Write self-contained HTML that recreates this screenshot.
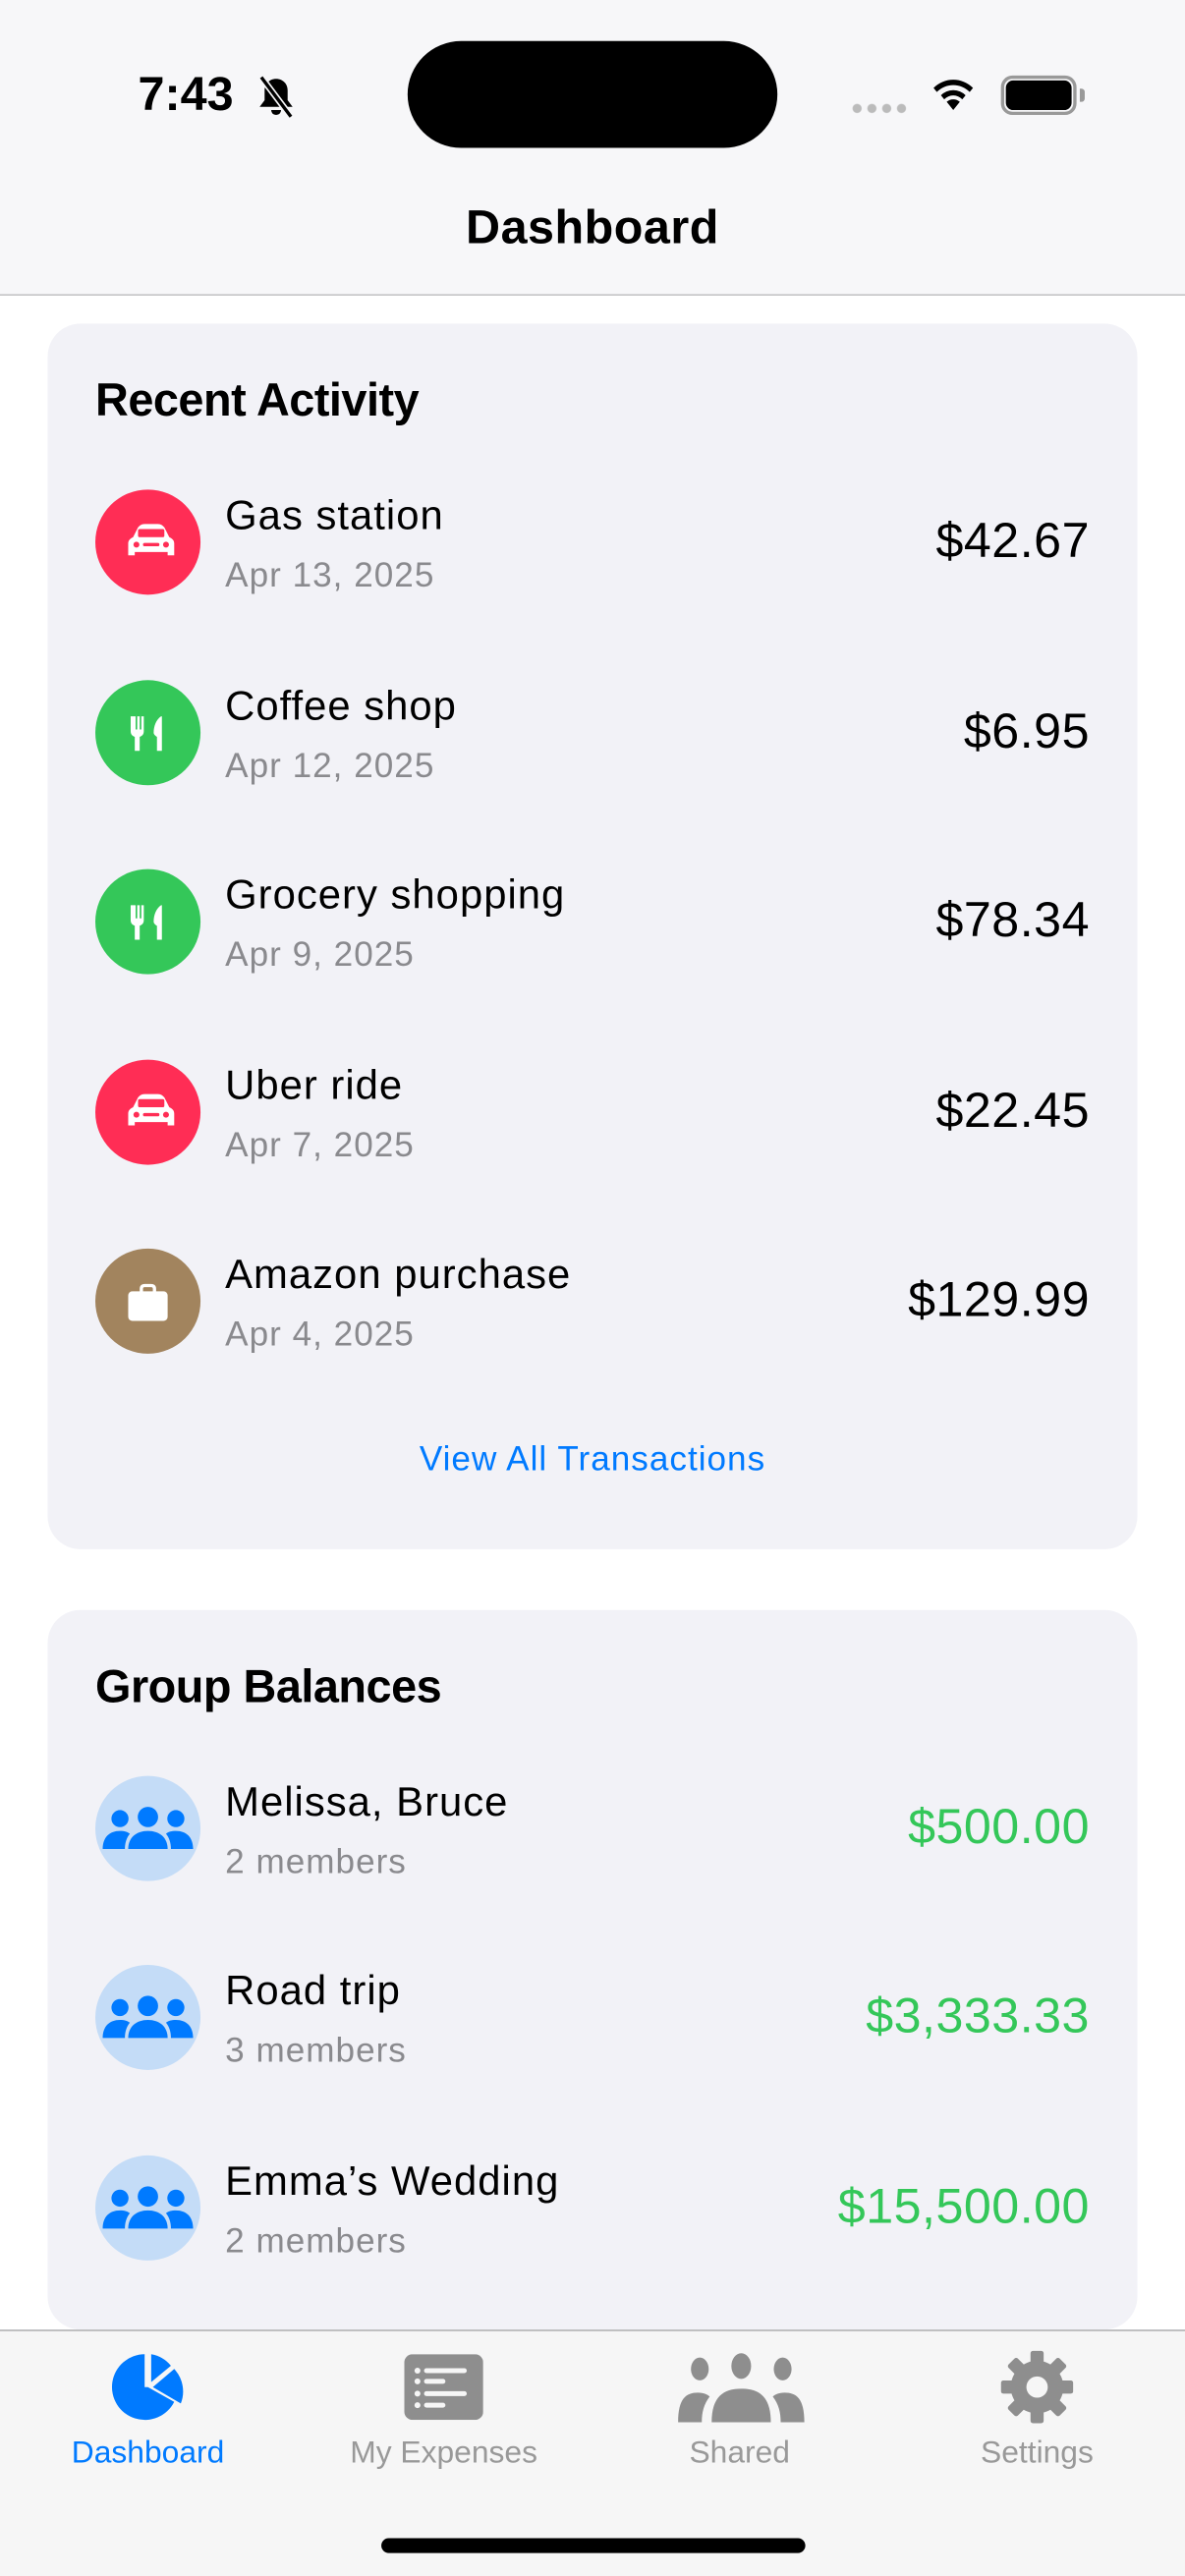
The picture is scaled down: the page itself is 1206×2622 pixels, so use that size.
<!DOCTYPE html>
<html><head><meta charset="utf-8"><style>
*{margin:0;padding:0;box-sizing:border-box}
html,body{width:1206px;height:2622px;overflow:hidden;background:#fff}
#w{position:absolute;left:0;top:0;width:721px;height:1568px;transform:scale(1.67268,1.67219);transform-origin:0 0;font-family:"Liberation Sans",sans-serif;color:#000}
.a{position:absolute}
.card{position:absolute;left:29px;width:663px;background:#f2f2f7;border-radius:20px}
.h{position:absolute;left:29px;font-size:28px;font-weight:bold;letter-spacing:-0.3px}
.ic{position:absolute;left:29px;width:64px;height:64px;border-radius:50%}
.t{position:absolute;left:108px;font-size:25px;letter-spacing:0.6px;white-space:nowrap}
.d{position:absolute;left:108px;font-size:21px;letter-spacing:0.6px;color:#8a8a8e;white-space:nowrap}
.m{position:absolute;right:29px;font-size:30px;letter-spacing:0.3px;white-space:nowrap}
.g{color:#34c759}
.tab{position:absolute;top:1483px;font-size:19px;color:#999;text-align:center;width:180px}
</style></head><body><div id="w">
<svg width="0" height="0" style="position:absolute"><defs>
<symbol id="car" viewBox="0 0 64 64"><path d="M20 40v-7c0-2 1-3 3-4l3-6c1-1 2-2 4-2h8c2 0 3 1 4 2l3 6c2 1 3 2 3 4v7h-4v-2H24v2z" fill="#fff"/><rect x="26" y="24" width="16" height="5" rx="1" fill="#ff2d55"/><circle cx="25" cy="33.5" r="1.8" fill="#ff2d55"/><circle cx="43" cy="33.5" r="1.8" fill="#ff2d55"/><rect x="29" y="32.5" width="10" height="2" rx="1" fill="#ff2d55"/></symbol>
<symbol id="fork" viewBox="0 0 64 64"><path d="M23 22h1.5v8h1v-8h1.5v8h1v-8H29.5v9c0 2-1 3-2.5 3.5V43h-3v-8.5c-1.5-.5-2.5-1.5-2.5-3.5v-9z" fill="#fff"/><path d="M40 22c-3 2-4.5 6-4.5 10 0 1 1 2 2 2.5V43h3V22z" fill="#fff"/></symbol>
<symbol id="bag" viewBox="0 0 64 64"><rect x="20" y="26" width="24" height="18" rx="2.5" fill="#fff"/><path d="M28 27v-2.5c0-1.5 1-2 2-2h4c1 0 2 .5 2 2V27" stroke="#fff" stroke-width="2" fill="none"/></symbol>
<symbol id="ppl" viewBox="0 0 64 64"><g fill="#007aff"><circle cx="15" cy="26" r="5.2"/><circle cx="32" cy="25" r="6.2"/><circle cx="49" cy="26" r="5.2"/><path d="M4.5 44.5c0-7 4-11 10.5-11 2.5 0 4.5.5 6 1.7-2 2.5-3 5.5-3 9.3z"/><path d="M20 44.5c0-7 5-11 12-11s12 4 12 11z"/><path d="M59.5 44.5c0-7-4-11-10.5-11-2.5 0-4.5.5-6 1.7 2 2.5 3 5.5 3 9.3z"/></g></symbol>
</defs></svg>

<div class="a" style="left:0;top:0;width:721px;height:180px;background:#f7f7f9;border-bottom:1px solid #c6c6c8"></div>
<div class="a" style="left:84px;top:42px;font-size:29px;font-weight:600">7:43</div>
<svg class="a" style="left:155px;top:45px" width="26" height="28" viewBox="0 0 26 28"><path d="M13 3c-4 0-7 3-7 7v6l-3 4h20l-3-4v-6c0-4-3-7-7-7z" fill="#000"/><path d="M10 22a3 3 0 0 0 6 0z" fill="#000"/><path d="M4 2l18 24" stroke="#f7f7f9" stroke-width="4"/><path d="M4 2l18 24" stroke="#000" stroke-width="2"/></svg>
<div class="a" style="left:248px;top:25px;width:225px;height:65px;background:#000;border-radius:33px"></div>
<div class="a" style="left:517px;top:63px;width:35px;height:6px;background:radial-gradient(circle,#bbb 2.5px,transparent 3px) 0 0/9px 6px"></div>
<svg class="a" style="left:565px;top:45px" width="30" height="24" viewBox="0 0 30 24"><path d="M15 22l-4-5a6 6 0 0 1 8 0z M7.5 13a10.5 10.5 0 0 1 15 0l-2 2.5a7.5 7.5 0 0 0-11 0z M3 8.5a17 17 0 0 1 24 0l-2 2.5a14 14 0 0 0-20 0z" fill="#000"/></svg>
<div class="a" style="left:609px;top:46px;width:46px;height:24px;border:2px solid #999;border-radius:7px"></div>
<div class="a" style="left:612px;top:49px;width:40px;height:18px;background:#000;border-radius:4.5px"></div>
<div class="a" style="left:657px;top:54px;width:3px;height:8px;background:#999;border-radius:0 2px 2px 0"></div>
<div class="a" style="left:0;top:123px;width:721px;text-align:center;font-size:29px;font-weight:bold;letter-spacing:0.3px">Dashboard</div>

<div class="card" style="top:197px;height:746px">
<div class="h" style="top:31px">Recent Activity</div>
<div class="ic" style="top:101px;background:#ff2d55"><svg width="64" height="64"><use href="#car"/></svg></div>
<div class="t" style="top:103px">Gas station</div><div class="d" style="top:142px">Apr 13, 2025</div><div class="m" style="top:116px">$42.67</div>
<div class="ic" style="top:217px;background:#34c759"><svg width="64" height="64"><use href="#fork"/></svg></div>
<div class="t" style="top:219px">Coffee shop</div><div class="d" style="top:258px">Apr 12, 2025</div><div class="m" style="top:232px">$6.95</div>
<div class="ic" style="top:332px;background:#34c759"><svg width="64" height="64"><use href="#fork"/></svg></div>
<div class="t" style="top:334px">Grocery shopping</div><div class="d" style="top:373px">Apr 9, 2025</div><div class="m" style="top:347px">$78.34</div>
<div class="ic" style="top:448px;background:#ff2d55"><svg width="64" height="64"><use href="#car"/></svg></div>
<div class="t" style="top:450px">Uber ride</div><div class="d" style="top:489px">Apr 7, 2025</div><div class="m" style="top:463px">$22.45</div>
<div class="ic" style="top:563px;background:#a2845e"><svg width="64" height="64"><use href="#bag"/></svg></div>
<div class="t" style="top:565px">Amazon purchase</div><div class="d" style="top:604px">Apr 4, 2025</div><div class="m" style="top:578px">$129.99</div>
<div class="a" style="left:0;width:663px;top:680px;text-align:center;font-size:21px;letter-spacing:0.6px;color:#007aff">View All Transactions</div>
</div>

<div class="card" style="top:980px;height:438px">
<div class="h" style="top:31px">Group Balances</div>
<div class="ic" style="top:101px;background:#c4dcf7"><svg width="64" height="64"><use href="#ppl"/></svg></div>
<div class="t" style="top:103px">Melissa, Bruce</div><div class="d" style="top:142px">2 members</div><div class="m g" style="top:116px">$500.00</div>
<div class="ic" style="top:216px;background:#c4dcf7"><svg width="64" height="64"><use href="#ppl"/></svg></div>
<div class="t" style="top:218px">Road trip</div><div class="d" style="top:257px">3 members</div><div class="m g" style="top:231px">$3,333.33</div>
<div class="ic" style="top:332px;background:#c4dcf7"><svg width="64" height="64"><use href="#ppl"/></svg></div>
<div class="t" style="top:334px">Emma’s Wedding</div><div class="d" style="top:373px">2 members</div><div class="m g" style="top:347px">$15,500.00</div>
</div>

<div class="a" style="left:0;top:1418px;width:721px;height:150px;background:#f6f6f6;border-top:1px solid #b5b5b7"></div>
<svg class="a" style="left:68px;top:1431px" width="44" height="44" viewBox="0 0 44 44"><path d="M20 2A20 20 0 1 0 38 31L22 22L20 22z" fill="#007aff"/><path d="M24 2v17L36 9A20 20 0 0 0 24 2z" fill="#007aff"/><path d="M25 22L42 32A20 20 0 0 0 38 11z" fill="#007aff"/></svg>
<svg class="a" style="left:246px;top:1433px" width="48" height="40" viewBox="0 0 48 40"><rect x="0" y="0" width="48" height="40" rx="5" fill="#8e8e8e"/><g fill="#f6f6f6"><circle cx="8" cy="10" r="1.8"/><circle cx="8" cy="16.5" r="1.8"/><circle cx="8" cy="24" r="1.8"/><circle cx="8" cy="31" r="1.8"/><rect x="12" y="8.5" width="26" height="3" rx="1.5"/><rect x="12" y="15" width="13" height="3" rx="1.5"/><rect x="12" y="22.5" width="26" height="3" rx="1.5"/><rect x="12" y="29.5" width="13" height="3" rx="1.5"/></g></svg>
<svg class="a" style="left:411px;top:1430px" width="80" height="48" viewBox="0 0 64 40"><g fill="#8e8e8e"><ellipse cx="11" cy="10" rx="4.5" ry="5.8"/><ellipse cx="32" cy="8.5" rx="5" ry="6.5"/><ellipse cx="53" cy="10" rx="4.5" ry="5.8"/><path d="M0 37c0-12 4-15 10-15 3 0 5 1 6 2-3 4-4 8-4 13z"/><path d="M17 37c0-13 6-17 15-17s15 4 15 17z"/><path d="M64 37c0-12-4-15-10-15-3 0-5 1-6 2 3 4 4 8 4 13z"/></g></svg>
<svg class="a" style="left:609px;top:1430px" width="44" height="46" viewBox="-22 -23 44 46"><g fill="#8e8e8e"><circle r="16"/><g id="tt"><rect x="-4" y="-22" width="8" height="10" rx="1.5"/></g><use href="#tt" transform="rotate(45)"/><use href="#tt" transform="rotate(90)"/><use href="#tt" transform="rotate(135)"/><use href="#tt" transform="rotate(180)"/><use href="#tt" transform="rotate(225)"/><use href="#tt" transform="rotate(270)"/><use href="#tt" transform="rotate(315)"/></g><circle r="6.5" fill="#f6f6f6"/></svg>
<div class="tab" style="left:0;color:#007aff">Dashboard</div>
<div class="tab" style="left:180px">My Expenses</div>
<div class="tab" style="left:360px">Shared</div>
<div class="tab" style="left:541px">Settings</div>
<div class="a" style="left:232px;top:1545px;width:258px;height:9px;background:#000;border-radius:5px"></div>
</div></body></html>
